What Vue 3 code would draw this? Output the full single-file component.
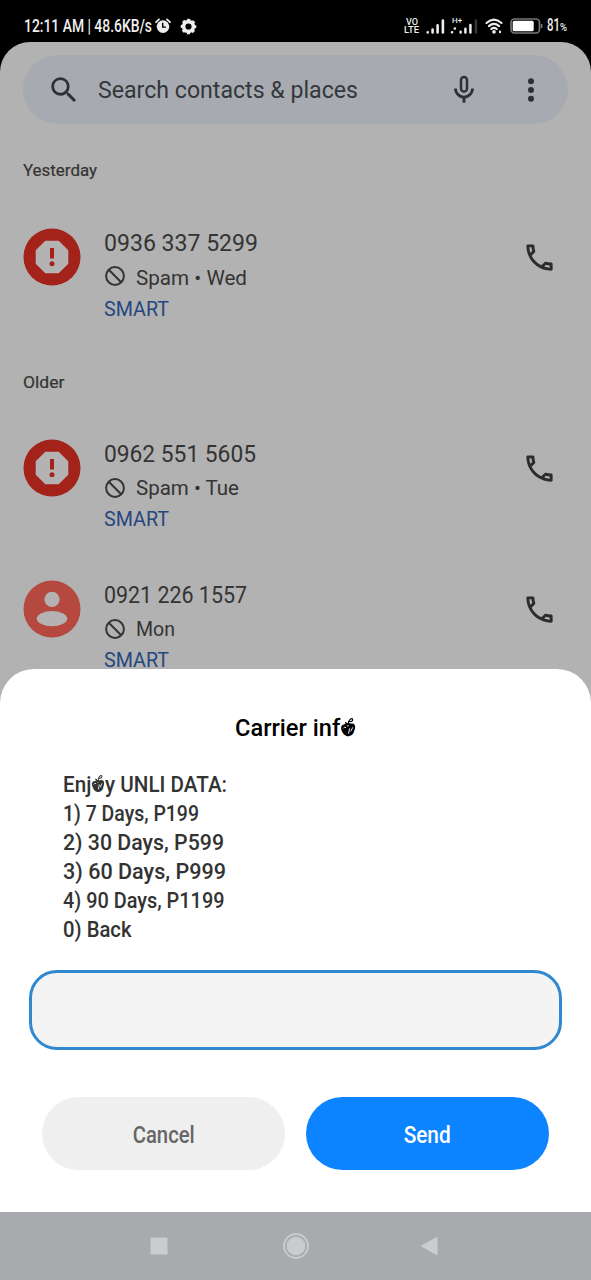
<script setup>
// Scales a line of text horizontally so that it takes up the given width.
const vFit = {
  mounted(el, { value }) {
    el.style.transform = `scaleX(${value / el.getBoundingClientRect().width})`
  },
}

const sections = [
  {
    title: 'Yesterday', titleWidth: 74, cls: 'recent',
    calls: [{ number: '0936 337 5299', width: 154, note: 'Spam • Wed', noteWidth: 111, spam: true }],
  },
  {
    title: 'Older', titleWidth: 41.5, cls: 'older',
    calls: [
      { number: '0962 551 5605', width: 152, note: 'Spam • Tue', noteWidth: 103, spam: true },
      { number: '0921 226 1557', width: 143, note: 'Mon', noteWidth: 39, spam: false },
    ],
  },
]

const options = [
  { text: '1) 7 Days, P199', width: 136 },
  { text: '2) 30 Days, P599', width: 161 },
  { text: '3) 60 Days, P999', width: 163 },
  { text: '4) 90 Days, P1199', width: 161.5 },
  { text: '0) Back', width: 68.5 },
]
</script>

<template>
  <div class="phone">
    <header class="status">
      <span class="clock"><span v-fit="128" class="fit">12:11 AM | 48.6KB/s</span></span>
      <svg class="alarm" width="16" height="16" viewBox="0 0 16 16">
        <circle cx="8" cy="8.6" r="6.3" fill="#eee" />
        <path d="M1 4.2 4 1.4M15 4.2 12 1.4" stroke="#eee" stroke-width="1.8" stroke-linecap="round" />
        <path d="M7.7 4.8v4.3h3.2" fill="none" stroke="#000" stroke-width="1.4" />
      </svg>
      <svg class="gear" width="17" height="17" viewBox="-8.5 -8.5 17 17">
        <circle r="4.9" fill="none" stroke="#eee" stroke-width="3.6" />
        <circle r="6.6" fill="none" stroke="#eee" stroke-width="2.5" stroke-dasharray="2.9 2.284" stroke-dashoffset="1.45" />
      </svg>
      <span class="spacer"></span>
      <span class="volte"><span v-fit="12" class="fit">VO</span><span v-fit="15" class="fit">LTE</span></span>
      <svg class="bars" width="19" height="15" viewBox="0 0 19 15" stroke="#eee" stroke-width="2.6" stroke-linecap="round">
        <path d="M1.7 13.2v.3M6.6 10.6v2.9M11.6 6.4v7.1M16.9 1.6v11.9" />
      </svg>
      <span class="hplus">
        <b>H+</b>
        <svg width="28" height="15" viewBox="0 0 28 15" stroke="#eee" stroke-width="2.5" stroke-linecap="round">
          <path d="M2 13.3h.1M4.8 9.6h.1M10.6 12.8v.6M15.4 9.8v3.6M20.4 6v7.4" />
          <path d="M25.9 1.4v12" stroke="#383838" />
        </svg>
      </span>
      <svg class="wifi" width="18" height="16" viewBox="0 0 18 16" fill="none" stroke="#eee" stroke-width="2.1" stroke-linecap="round">
        <path d="M1.5 5Q9-1.7 16.5 5M3.9 8.1Q9 3.7 14.1 8.1M6.3 11Q9 8.8 11.7 11" />
        <circle cx="9" cy="13.8" r=".8" fill="#eee" /><path d="M15 13.5v.7" />
      </svg>
      <svg class="battery" width="33" height="16" viewBox="0 0 33 16">
        <rect x="1" y="1" width="28.5" height="14" rx="3.5" fill="none" stroke="#777" stroke-width="1.7" />
        <rect x="2.7" y="2.8" width="21" height="10.4" rx="1.5" fill="#fff" />
        <path d="M31.6 6v4" stroke="#777" stroke-width="1.6" />
      </svg>
      <span class="percent"><span v-fit="13" class="fit">81</span><small v-fit="7" class="fit">%</small></span>
    </header>

    <main class="app">
      <div class="search">
        <svg class="lens" width="34" height="34" viewBox="0 0 24 24" fill="#2d3034">
          <path d="M15.5 14h-.79l-.28-.27A6.47 6.47 0 0 0 16 9.5 6.5 6.5 0 1 0 9.5 16c1.61 0 3.09-.59 4.23-1.57l.27.28v.79l5 4.99L20.49 19l-4.99-5zm-6 0C7.01 14 5 11.99 5 9.5S7.01 5 9.5 5 14 7.01 14 9.5 11.99 14 9.5 14z" />
        </svg>
        <span class="hint"><span v-fit="260" class="fit">Search contacts &amp; places</span></span>
        <svg class="mic" width="34" height="34" viewBox="0 0 24 24" fill="#2d3034">
          <path d="M12 14c1.66 0 3-1.34 3-3V5c0-1.66-1.34-3-3-3S9 3.34 9 5v6c0 1.66 1.34 3 3 3zm-1.2-9.1c0-.66.54-1.2 1.2-1.2s1.2.54 1.2 1.2v6.2c0 .66-.54 1.2-1.2 1.2s-1.2-.54-1.2-1.2V4.9zM17 11c0 2.76-2.24 5-5 5s-5-2.24-5-5H5c0 3.53 2.61 6.43 6 6.92V21h2v-3.08c3.39-.49 6-3.39 6-6.92h-2z" />
        </svg>
        <svg class="more" width="8" height="26" viewBox="0 0 8 26" fill="#2d3034">
          <circle cx="4" cy="4.3" r="3" /><circle cx="4" cy="13" r="3" /><circle cx="4" cy="21.7" r="3" />
        </svg>
      </div>

      <section v-for="s in sections" :key="s.title" :class="s.cls">
        <h2><span v-fit="s.titleWidth" class="fit">{{ s.title }}</span></h2>
        <article v-for="c in s.calls" :key="c.number" class="call">
          <svg v-if="c.spam" class="avatar" width="58" height="58" viewBox="0 0 58 58">
            <circle cx="29" cy="29" r="28.5" fill="#a3221a" />
            <path d="M22.3 12.7h13.4l9.6 9.6v13.4l-9.6 9.6H22.3l-9.6-9.6V22.3z" fill="#b4b2b2" />
            <path d="M27 20h4v10.5h-4z" fill="#a3221a" /><circle cx="29" cy="35.8" r="2.5" fill="#a3221a" />
          </svg>
          <svg v-else class="avatar" width="58" height="58" viewBox="0 0 58 58">
            <circle cx="29" cy="29" r="28.5" fill="#b5483f" />
            <circle cx="29" cy="19.3" r="7.6" fill="#b4b2b2" />
            <ellipse cx="29" cy="38.6" rx="15.2" ry="7.7" fill="#b4b2b2" />
          </svg>
          <div class="details">
            <div class="number"><span v-fit="c.width" class="fit">{{ c.number }}</span></div>
            <div class="note">
              <svg class="ban" width="22" height="22" viewBox="0 0 22 22" fill="none" stroke="#343434" stroke-width="2">
                <circle cx="11" cy="11" r="8.9" /><path d="m4.8 4.8 12.4 12.4" />
              </svg>
              <span v-fit="c.noteWidth" class="fit">{{ c.note }}</span>
            </div>
            <div class="sim"><span v-fit="65" class="fit">SMART</span></div>
          </div>
          <svg class="dial" width="35" height="35" viewBox="0 0 24 24" fill="#2c2c2c">
            <path d="M6.54 5c.06.89.21 1.76.45 2.59l-1.2 1.2c-.41-1.2-.67-2.47-.76-3.79h1.51m9.86 12.02c.85.24 1.72.39 2.6.45v1.49c-1.32-.09-2.59-.35-3.8-.75l1.2-1.19M7.5 3H4c-.55 0-1 .45-1 1 0 9.39 7.61 17 17 17 .55 0 1-.45 1-1v-3.49c0-.55-.45-1-1-1-1.24 0-2.45-.2-3.57-.57-.1-.04-.21-.05-.31-.05-.26 0-.51.1-.71.29l-2.2 2.2c-2.83-1.45-5.15-3.76-6.59-6.59l2.2-2.2c.28-.28.36-.67.25-1.02C8.7 6.45 8.5 5.25 8.5 4c0-.55-.45-1-1-1z" />
          </svg>
        </article>
      </section>
    </main>

    <div class="sheet">
      <h1><span v-fit="121" class="fit">Carrier inf<span class="heart">o<svg viewBox="0 0 15 19">
        <path d="M7.5 18.3C3 16 .6 13 .8 9.8 1 6.8 5 5.6 7.4 9 9.8 4.8 14 5.2 14.3 8.8 14.5 12.5 11.5 16.3 7.5 18.3Z" fill="currentColor" />
        <path d="M3 10.5q1-1.800 2.500-.8M8 15.500l1-5M10 13.500l2-4" fill="none" stroke="#fff" stroke-width=".9" />
        <path d="M7 7q-1-2-2.500-2M8 6.500q-.5-3 1-4 3-2.500 3 0Q11.500 4.600 8.700 4" fill="none" stroke="currentColor" stroke-width="1.1" />
      </svg></span></span></h1>
      <div class="menu">
        <p><span v-fit="164" class="fit">Enj<span class="heart">o<svg viewBox="0 0 15 19">
          <path d="M7.5 18.3C3 16 .6 13 .8 9.8 1 6.8 5 5.6 7.4 9 9.8 4.8 14 5.2 14.3 8.8 14.5 12.5 11.5 16.3 7.5 18.3Z" fill="currentColor" />
          <path d="M3 10.5q1-1.800 2.500-.8M8 15.500l1-5M10 13.500l2-4" fill="none" stroke="#fff" stroke-width=".9" />
          <path d="M7 7q-1-2-2.500-2M8 6.500q-.5-3 1-4 3-2.500 3 0Q11.500 4.600 8.700 4" fill="none" stroke="currentColor" stroke-width="1.1" />
        </svg></span>y UNLI DATA:</span></p>
        <p v-for="o in options" :key="o.text"><span v-fit="o.width" class="fit">{{ o.text }}</span></p>
      </div>
      <input class="reply" type="text" aria-label="Reply" />
      <div class="actions">
        <button class="cancel"><span v-fit="62" class="fit">Cancel</span></button>
        <button class="send"><span v-fit="47" class="fit">Send</span></button>
      </div>
    </div>

    <nav class="nav">
      <svg width="18" height="18" viewBox="0 0 18 18"><path d="M.5.5h17v17H.5z" fill="#cbcccf" /></svg>
      <svg width="28" height="28" viewBox="0 0 28 28">
        <circle cx="14" cy="14" r="12" fill="none" stroke="#cbcccf" stroke-width="1.8" /><circle cx="14" cy="14" r="9.3" fill="#cbcccf" />
      </svg>
      <svg width="18" height="20" viewBox="0 0 18 20"><path d="M.5 10 17.5.5v19z" fill="#cbcccf" /></svg>
    </nav>
  </div>
</template>

<style>
body { margin: 0; background: #000; }
</style>

<style scoped>
.phone { width: 591px; height: 1280px; display: flex; flex-direction: column; overflow: hidden; background: #000; font-family: Roboto, "Liberation Sans", sans-serif; }
.phone svg { display: block; flex: none; }
.fit { display: inline-block; transform-origin: left center; white-space: nowrap; }
h1, h2, p { margin: 0; }

.status { height: 42px; box-sizing: border-box; padding: 10px 0 0 24px; display: flex; align-items: center; color: #eee; flex: none; }
.clock { width: 131px; font-size: 18px; font-weight: 500; line-height: 32px; }
.gear { margin-left: 9px; }
.spacer { flex: 1; }
.volte { width: 22px; display: flex; flex-direction: column; align-items: flex-start; font-size: 9px; font-weight: 500; line-height: 8.5px; }
.volte .fit:first-child { margin-left: 2px; }
.hplus { position: relative; margin-left: 5px; }
.hplus b { position: absolute; left: 2px; top: -3px; font-size: 8px; line-height: 9px; font-weight: 500; }
.wifi { margin-left: 7px; }
.battery { margin-left: 7px; }
.percent { width: 44px; margin-left: 4px; display: flex; align-items: baseline; font-size: 18px; font-weight: 500; line-height: 32px; }
.percent .fit { flex: none; }
.percent small { margin-left: -7px; font-size: 10px; }

.app { height: 661px; flex: none; box-sizing: border-box; padding: 13px 23px 0; background: #b2b2b2; border-radius: 30px 30px 0 0; overflow: hidden; }
.search { height: 69px; border-radius: 35px; background: #a7abb1; display: flex; align-items: center; }
.lens { margin-left: 24px; }
.hint { box-sizing: border-box; margin-left: 17px; width: 343px; padding-top: 2px; font-size: 23px; line-height: 30px; color: #34373b; }
.mic { margin-left: 6px; }
.more { margin-left: 46px; }

h2 { height: 20px; font-size: 16.5px; font-weight: 400; line-height: 20px; color: #343434; -webkit-text-stroke: 0.2px; }
.recent h2 { margin-top: 37px; }
.older h2 { margin-top: 51px; }
.call { height: 94px; display: flex; align-items: flex-start; }
.call + .call { margin-top: 47px; }
.recent .call, .older h2 + .call { margin-top: 46.5px; }
.avatar { position: relative; }
.details { width: 418px; margin-left: 23px; padding-top: 1px; color: #343434; }
.number { height: 30px; font-size: 23px; line-height: 30px; }
.note { height: 24px; margin-top: 6px; display: flex; align-items: center; gap: 10px; font-size: 20.5px; line-height: 24px; }
.recent .note { margin-top: 7.5px; }
.recent .ban { margin-top: -4px; }
.sim { height: 24px; margin-top: 6.5px; font-size: 20px; line-height: 24px; color: #24477f; }
.dial { margin-top: 12px; }

.sheet { height: 543px; margin-top: -34px; flex: none; position: relative; background: #fff; border-radius: 34px 34px 0 0; }
h1 { padding-top: 44px; height: 30px; font-size: 24px; font-weight: 500; line-height: 30px; text-align: center; color: #000; }
h1 .fit { transform-origin: center; }
.heart { position: relative; margin: 0 0.05em; }
.heart svg { position: absolute; left: -0.04em; bottom: 0.2em; width: 0.66em; height: 0.86em; }
.menu { padding: 27px 0 0 63px; font-size: 22px; font-weight: 500; color: #333; }
.menu p { height: 29px; line-height: 29px; }
.reply { display: block; box-sizing: border-box; width: 533px; height: 80px; margin: 26px 0 0 29px; padding: 0 24px; border: 3px solid #2f88d0; border-radius: 28px; background: #f4f4f4; font: 22px Roboto, sans-serif; outline: none; }
.actions { display: flex; gap: 21px; margin: 47px 0 0 42px; }
button { width: 243px; height: 73px; padding: 2px 0 0; border: 0; border-radius: 37px; font: 500 24px/30px Roboto, sans-serif; }
button .fit { transform-origin: center; }
.cancel { background: #efefef; color: #666; }
.send { background: #0d84ff; color: #fff; }

.nav { height: 68px; flex: none; background: #a8aaad; display: flex; align-items: center; padding-left: 150px; }
.nav svg:nth-child(2) { margin-left: 114px; }
.nav svg:nth-child(3) { margin-left: 110px; }
</style>
